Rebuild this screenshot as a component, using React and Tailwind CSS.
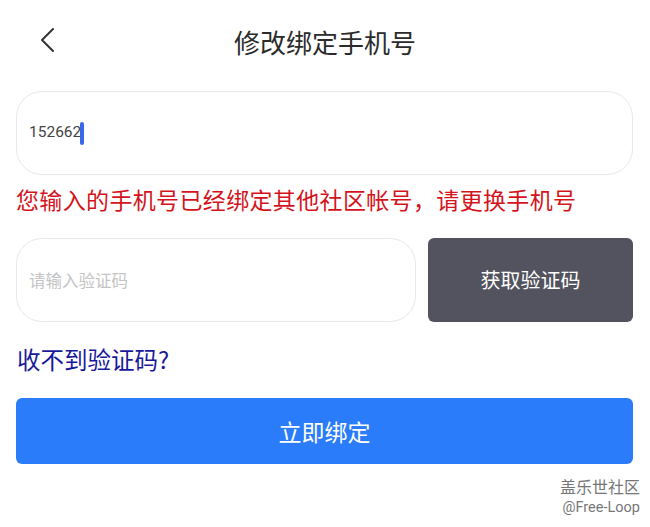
export default function App() {
  return (
    <div
      className="w-[650px] h-[527px] bg-white relative overflow-hidden"
      style={{ fontFamily: '"Noto Sans CJK SC", "Noto Sans", Roboto, sans-serif' }}
    >
      <div className="h-[82px] flex items-center relative">
        <svg className="absolute left-[38px] top-[27px]" width="18" height="26" viewBox="0 0 18 26">
          <path d="M15 2 L4 13 L15 24" fill="none" stroke="#333" strokeWidth="2" strokeLinecap="round" strokeLinejoin="round" />
        </svg>
        <div className="w-full text-center text-[26px] text-[#2b2b2b] leading-none pt-[1px]">修改绑定手机号</div>
      </div>
      <div className="px-[16px] pr-[17px] flex flex-col">
        <div className="mt-[9px] h-[84px] rounded-[26px] border border-[#e8e8e8] flex items-center pl-[12px]">
          <span className="text-[15.5px] text-[#444]" style={{ fontFamily: 'Roboto, sans-serif' }}>152662</span>
          <span className="w-[4px] h-[23px] bg-[#3b68e8] rounded-[2px] -ml-[1px]"></span>
        </div>
        <div className="mt-[9px] text-[23px] leading-[30px] text-[#d4141c] tracking-[0.35px]">您输入的手机号已经绑定其他社区帐号，请更换手机号</div>
        <div className="mt-[24px] flex gap-[12px] h-[84px]">
          <div className="w-[400px] rounded-[26px] border border-[#e8e8e8] flex items-center pl-[12px] text-[16.5px] text-[#c4c4c4]">请输入验证码</div>
          <div className="flex-1 rounded-[6px] bg-[#52535e] flex items-center justify-center text-white text-[20px]">获取验证码</div>
        </div>
        <div className="mt-[22px] text-[23.5px] leading-[30px] text-[#17189a] pl-[1px]">收不到验证码?</div>
        <div className="mt-[24px] h-[66px] rounded-[6px] bg-[#2a7cfa] flex items-center justify-center text-white text-[23px]">立即绑定</div>
      </div>
      <div className="absolute right-[10px] top-[475px] flex flex-col items-end text-[#777]">
        <div className="text-[16px] leading-[22px]">盖乐世社区</div>
        <div className="text-[14.5px] leading-[20px] mt-[1px]" style={{ fontFamily: 'Roboto, sans-serif' }}>@Free-Loop</div>
      </div>
    </div>
  );
}
